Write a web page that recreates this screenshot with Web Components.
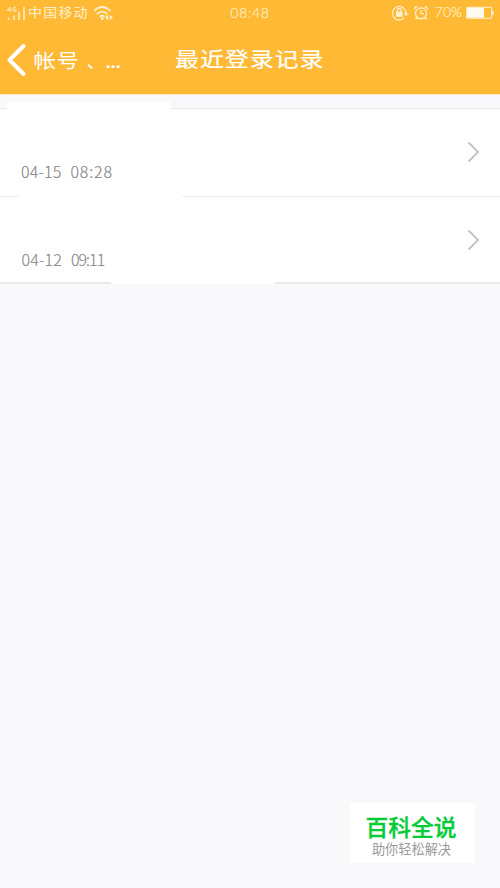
<!DOCTYPE html>
<html lang="zh-CN">
<head>
<meta charset="utf-8">
<title>最近登录记录</title>
<style>
body{margin:0;background:#f9f9fc;font-family:Lato,"Noto Sans CJK SC",sans-serif}
</style>
</head>
<body>
<login-page></login-page>
<script>
function define(name, html){
  const t=document.createElement('template');
  t.innerHTML=html;
  customElements.define(name,class extends HTMLElement{
    constructor(){super();this.attachShadow({mode:'open'}).append(t.content.cloneNode(true));}
  });
}
define('status-bar',`<style>
:host{display:grid;grid-template-columns:1fr auto 1fr;height:25px;align-items:center;color:#fff0cc;font-weight:300;font-size:14px;line-height:25px;white-space:nowrap;box-sizing:border-box;padding:0 6px}
.l,.r{display:flex;align-items:center}.r{justify-content:flex-end}
svg{display:block;flex:none;fill:none;stroke:#fff0cc}
.c{font:400 14px/22px "Noto Sans CJK SC",sans-serif;letter-spacing:1.2px;margin:0 4px 2px 3px;transform:scaleY(.9)}
.t{letter-spacing:.7px;-webkit-text-stroke:.2px #fff0cc}
.p{font-size:14px;margin:0 4px 0 6px;position:relative;top:-1px;-webkit-text-stroke:.2px #fff0cc}
</style>
<div class="l"><svg width="19" height="16" viewBox="0 0 19 16"><g stroke-width="1.5"><path d="M2.5 12.5v2.5M8 10.5V15M13 6.5V15M18 2V15"/></g><path stroke-width="1" d="M4.2 6.6V2.2L1.3 5.3h4M10 3Q9.3 2.4 8.5 2.4 6.8 2.5 6.8 4.3 6.9 6.2 8.7 6.2q.8 0 1.4-.5V4.5H8.6"/></svg><span class="c">中国移动</span>
<svg width="21" height="16" viewBox="0 0 21 16"><path stroke-width="1.7" d="M1 6Q9-2 17.5 6M4 9q5-4.6 10.5 0M6.7 11.7q2.5-2.2 5 0"/><circle cx="9.2" cy="13.6" r="1.5" fill="#fff0cc" stroke="none"/><path fill="#fff0cc" stroke="none" d="m12 12.5 3.2-2.8v5.6zM20 12.5l-3.2-2.8v5.6z"/></svg></div>
<span class="t">08:48</span>
<div class="r"><svg width="18" height="18" viewBox="0 0 18 18"><path stroke-width="1.2" d="M13.2 13.9A6.8 6.8 0 1 1 15 9"/><path fill="#fff0cc" stroke="none" d="M5 7.8h6.6v5H5z"/><path stroke-width="1.3" d="M6.4 8V6.4a1.9 1.9 0 0 1 3.8 0V8M13 9.8h4.4M15.2 8v4"/></svg>
<svg style="margin-left:4px" width="16" height="18" viewBox="0 0 16 18"><g stroke-width="1.3"><circle cx="8" cy="9.3" r="5.5"/><path d="M8 6.3v3.3h3M1.3 5.3q.3-2.2 3-2.8M14.7 5.3q-.3-2.2-3-2.8M4 13.5l-1.5 2M12 13.5l1.5 2"/></g></svg>
<span class="p">70%</span>
<svg width="28" height="14" viewBox="0 0 28 14"><rect x=".7" y="1.2" width="25" height="11" rx="1" stroke-width="1.1"/><path d="M1 1.7h17v10H1z" fill="#fffaf0" stroke="none"/><path d="M26.8 5v4" stroke-width="1.6"/></svg></div>`);
define('nav-bar',`<style>
:host{display:grid;grid-template-columns:26px 149px 1fr;height:69px;color:#fff;box-sizing:border-box;font-family:"Noto Sans CJK SC",sans-serif;font-weight:400;white-space:nowrap}
svg{display:block;margin:18px 0 0 6px}
.b{display:flex;font-size:22.5px;line-height:30px;letter-spacing:.5px;padding:19px 0 0 7.5px;transform:scaleY(.88);transform-origin:0 34px}
.d{display:flex;align-items:center;height:5px;margin:21px 0 0 4px;letter-spacing:-.3px;font:700 19px/5px "Liberation Sans",sans-serif}
.d span{transform:translateY(-5px)}
.comma{margin-left:7px;width:15px;font-size:19px;line-height:33px}
h1{font:inherit;font-size:24px;line-height:30px;letter-spacing:.9px;margin:0;padding:18px 0 0;transform:scaleY(.84);transform-origin:0 34px;-webkit-text-stroke:.25px #fff}
</style><svg width="21" height="34" viewBox="0 0 21 34"><path d="M17.5 3 3.5 17l14 14" fill="none" stroke="#fff" stroke-width="4" stroke-linecap="round" stroke-linejoin="round"/></svg><div class="b"><span>帐号</span><span class="comma">、</span><span class="d" lang="en"><span>...</span></span></div><h1><slot></slot></h1>`);
define('login-record',`<style>
:host{display:flex;height:var(--height,87px);box-sizing:border-box;background:#fff;justify-content:space-between;color:#858585;font:300 16px/20px "Noto Sans CJK SC",sans-serif;padding:0 20px 0 21px}
.t{display:flex;align-self:flex-start;margin-top:52px;white-space:nowrap;-webkit-text-stroke:.15px #858585}
svg{margin-top:var(--arrow,32px)}
</style><div class="t"><slot></slot></div><svg width="13" height="22" viewBox="0 0 13 22"><path d="m1.5 1.5 9.5 9.5-9.5 9.5" fill="none" stroke="#c5c5c5" stroke-width="2"/></svg>`);
define('split-line',`<style>
:host{display:grid;height:var(--h,1px);grid-template-columns:var(--a) var(--b) 1fr;background:var(--side,#e9e9ec)}
i{grid-column:2;background:#fff}</style><i></i>`);
define('brand-card',`<style>
:host{display:flex;flex-direction:column;align-items:center;width:125px;height:60px;background:#fff;font-family:"Noto Sans CJK SC",sans-serif;white-space:nowrap}
b{font-size:22.8px;line-height:22px;font-weight:500;-webkit-text-stroke:.3px #05cb37;color:#05cb37;margin-top:13px;margin-left:-3px}
span{font-size:13.2px;line-height:18px;color:#999;margin-top:2px;margin-left:-2px}
</style><b>百科全说</b><span>助你轻松解决</span>`);
define('login-page',`<style>
:host{display:flex;flex-direction:column;height:888px;width:500px;overflow:hidden;background:#f9f9fc}
header{background:#ffb934;height:94px;flex:none}
.gap{height:8px;flex:none;box-sizing:border-box;border-top:1px solid #fdebc8}
.date{width:49.5px;letter-spacing:.2px}.time{letter-spacing:.8px}.two{width:49.5px;margin-left:.5px;letter-spacing:.2px}.narrow{letter-spacing:-1px}
split-line,login-record{flex:none}
brand-card{margin:auto 25px 25px auto}
</style><header><status-bar></status-bar><nav-bar>最近登录记录</nav-bar></header><div class="gap"></div>
<split-line style="--h:6px;--a:7px;--b:164px;--side:#f9f9fc"></split-line>
<split-line style="--a:7px;--b:164px"></split-line>
<login-record><span class="date">04-15</span><span class="time">08:28</span></login-record>
<split-line style="--a:18px;--b:165px"></split-line>
<login-record style="--height:85px;--arrow:31.5px"><span class="two">04-12</span><span class="narrow">09:11</span></login-record>
<split-line style="--h:2px;--a:111px;--b:164px"></split-line>
<brand-card></brand-card>`);
</script>
</body>
</html>
